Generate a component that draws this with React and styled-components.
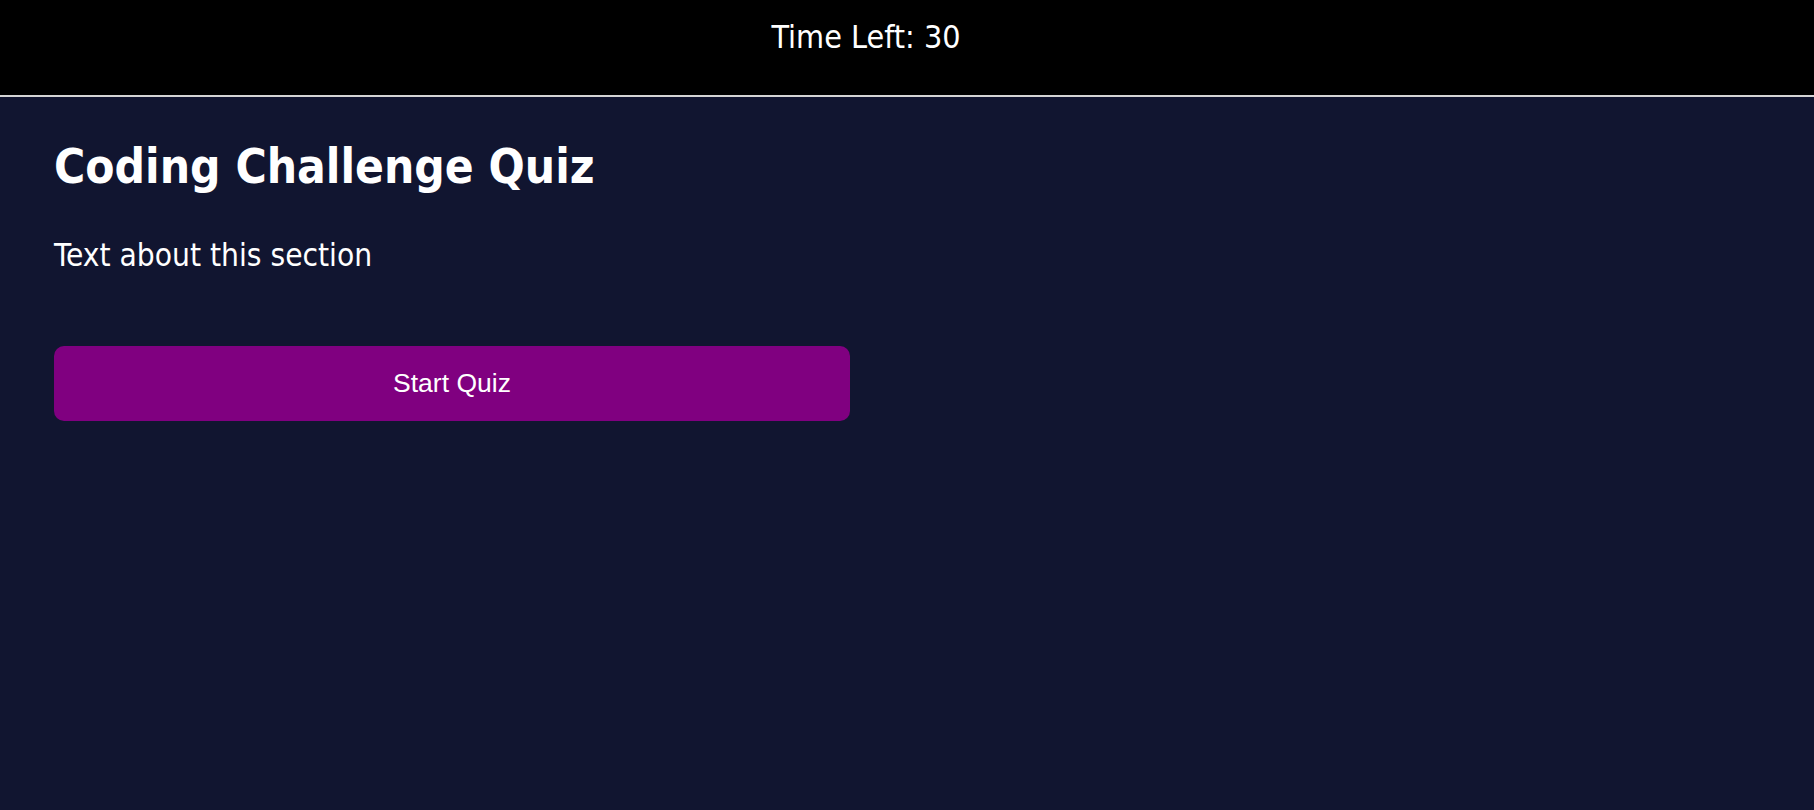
import React from 'react';
import styled, { createGlobalStyle } from 'styled-components';

const GlobalStyle = createGlobalStyle`
  html, body {
    margin: 0;
    padding: 0;
    background-color: #111530;
  }
  body {
    min-height: 810px;
    font-family: 'DejaVu Sans Condensed', 'DejaVu Sans', sans-serif;
    color: #ffffff;
  }
`;

const Page = styled.div`
  min-height: 810px;
  background-color: #111530;
`;

const Header = styled.header`
  display: flex;
  justify-content: center;
  align-items: flex-start;
  height: 97px;
  box-sizing: border-box;
  padding: 18px 82px 0 0;
  background-color: #000000;
  border-bottom: 2px solid #d4d4d4;
`;

const Timer = styled.div`
  font-size: 32px;
  line-height: 1.2;
  color: #ffffff;
`;

const Section = styled.main`
  display: flex;
  flex-direction: column;
  align-items: flex-start;
  padding: 41.5px 54px 0;
`;

const Title = styled.h1`
  margin: 0;
  font-size: 47.4px;
  font-weight: 700;
  line-height: 1.2;
`;

const Intro = styled.p`
  margin: 41.6px 0 0;
  font-size: 31.4px;
  line-height: 1.2;
`;

const StartButton = styled.button`
  width: 796px;
  height: 75px;
  margin-top: 71.3px;
  border: none;
  border-radius: 10px;
  background-color: #800080;
  color: #ffffff;
  font-family: 'Liberation Sans', Arial, sans-serif;
  font-size: 26.5px;
  cursor: pointer;
`;

export default function App() {
  return (
    <Page>
      <GlobalStyle />
      <Header>
        <Timer>Time Left: 30</Timer>
      </Header>
      <Section>
        <Title>Coding Challenge Quiz</Title>
        <Intro>Text about this section</Intro>
        <StartButton>Start Quiz</StartButton>
      </Section>
    </Page>
  );
}
